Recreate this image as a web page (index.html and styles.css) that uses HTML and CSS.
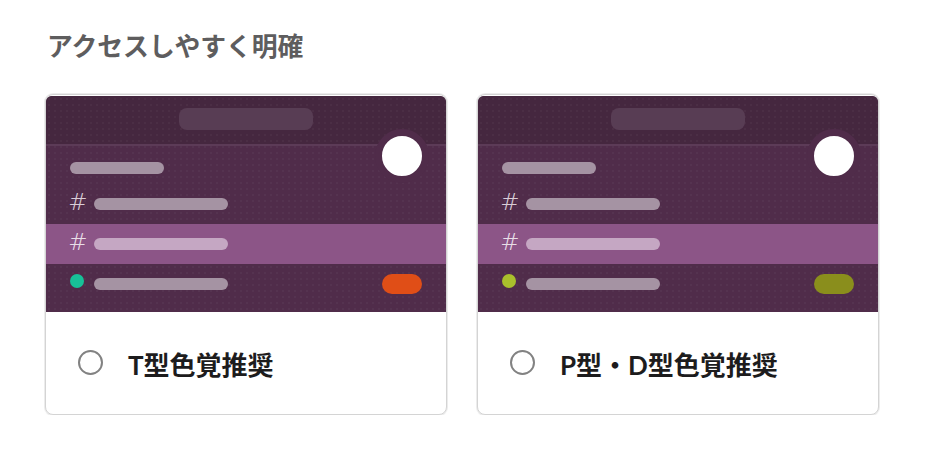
FILE: index.html
```html
<!DOCTYPE html>
<html lang="ja">
<head>
<meta charset="utf-8">
<title>アクセスしやすく明確</title>
<link rel="stylesheet" href="styles.css">
</head>
<body>
<main class="page">
  <h1 class="heading">アクセスしやすく明確</h1>
  <div class="cards">
    <label class="card">
      <div class="preview">
        <div class="topbar"><div class="search"></div></div>
        <div class="sidebar">
          <div class="ws-row"><span class="bar bar-title"></span></div>
          <div class="row"><span class="icon hash">#</span><span class="bar"></span></div>
          <div class="row row-active"><span class="icon hash">#</span><span class="bar"></span></div>
          <div class="row"><span class="icon"><span class="dot dot-teal"></span></span><span class="bar"></span><span class="badge badge-orange"></span></div>
        </div>
        <div class="avatar"></div>
      </div>
      <div class="option">
        <span class="radio"></span>
        <span class="label">T型色覚推奨</span>
      </div>
    </label>
    <label class="card">
      <div class="preview">
        <div class="topbar"><div class="search"></div></div>
        <div class="sidebar">
          <div class="ws-row"><span class="bar bar-title"></span></div>
          <div class="row"><span class="icon hash">#</span><span class="bar"></span></div>
          <div class="row row-active"><span class="icon hash">#</span><span class="bar"></span></div>
          <div class="row"><span class="icon"><span class="dot dot-lime"></span></span><span class="bar"></span><span class="badge badge-olive"></span></div>
        </div>
        <div class="avatar"></div>
      </div>
      <div class="option">
        <span class="radio"></span>
        <span class="label">P型・D型色覚推奨</span>
      </div>
    </label>
  </div>
</main>
</body>
</html>
```

FILE: styles.css
```css
* { box-sizing: border-box; }

html, body {
  margin: 0;
  background: #ffffff;
}

body {
  font-family: "Lato", "Noto Sans CJK JP", sans-serif;
}

.page {
  padding: 30px 45px 0;
}

.heading {
  margin: 0 0 32px 2px;
  font-size: 25.8px;
  line-height: 32px;
  font-weight: 700;
  color: #5e5d5e;
}

.cards {
  display: flex;
  gap: 30px;
}

.card {
  display: block;
  width: 402px;
  border: 1px solid #d4d4d4;
  border-radius: 8px;
  padding-top: 1px;
  background: #fff;
  box-shadow: 0 0 0 1px #ececec, 0 1px 2px rgba(0, 0, 0, 0.06);
}

.preview {
  position: relative;
  height: 216px;
  border-radius: 6px 6px 0 0;
  overflow: hidden;
  background-color: #502c4a;
  background-image: radial-gradient(circle, rgba(255, 255, 255, 0.05) 0.6px, transparent 0.9px);
  background-size: 6px 6px;
}

.topbar {
  height: 50px;
  padding-top: 12px;
  display: flex;
  justify-content: center;
  background-color: #45273f;
  background-image: radial-gradient(circle, rgba(255, 255, 255, 0.05) 0.6px, transparent 0.9px);
  background-size: 6px 6px;
  border-bottom: 2px solid #5c3b57;
}

.search {
  width: 134px;
  height: 22px;
  border-radius: 8px;
  background: #583d54;
}

.sidebar {
  padding-bottom: 8px;
}

.ws-row {
  height: 38px;
  padding: 16px 24px 0;
}

.bar {
  display: block;
  width: 134px;
  height: 12px;
  border-radius: 6px;
  background: #a593a3;
}

.bar-title {
  width: 94px;
}

.row {
  height: 40px;
  padding: 0 24px;
  display: flex;
  align-items: center;
  gap: 8px;
}

.row-active {
  background: #8c5587;
}

.row-active .bar {
  background: #c5a7c3;
}

.icon {
  width: 16px;
  display: flex;
  align-items: center;
}

.hash {
  justify-content: center;
  font-family: "DejaVu Sans", sans-serif;
  font-weight: 200;
  font-size: 23px;
  line-height: 24px;
  color: #d9cdd7;
  margin-bottom: 4px;
}

.row-active .hash {
  color: #e8dee7;
}

.dot {
  width: 14px;
  height: 14px;
  border-radius: 50%;
  margin-bottom: 7px;
}

.dot-teal { background: #17c198; }
.dot-lime { background: #a9bf2c; }

.badge {
  margin-left: auto;
  width: 40px;
  height: 20px;
  border-radius: 10px;
}

.badge-orange { background: #e04e17; }
.badge-olive { background: #8a8e1c; }

.avatar {
  position: absolute;
  left: 329px;
  top: 33px;
  width: 54px;
  height: 54px;
  border-radius: 50%;
  background: #ffffff;
  border: 7px solid #502c4a;
}

.option {
  height: 102px;
  display: flex;
  align-items: center;
  padding-left: 32px;
  padding-bottom: 2px;
}

.radio {
  width: 25px;
  height: 25px;
  border-radius: 50%;
  border: 2px solid #828282;
  flex: none;
}

.label {
  margin-left: 25px;
  font-size: 26px;
  font-weight: 700;
  color: #1d1c1d;
  line-height: 32px;
  margin-top: 5px;
}
```
